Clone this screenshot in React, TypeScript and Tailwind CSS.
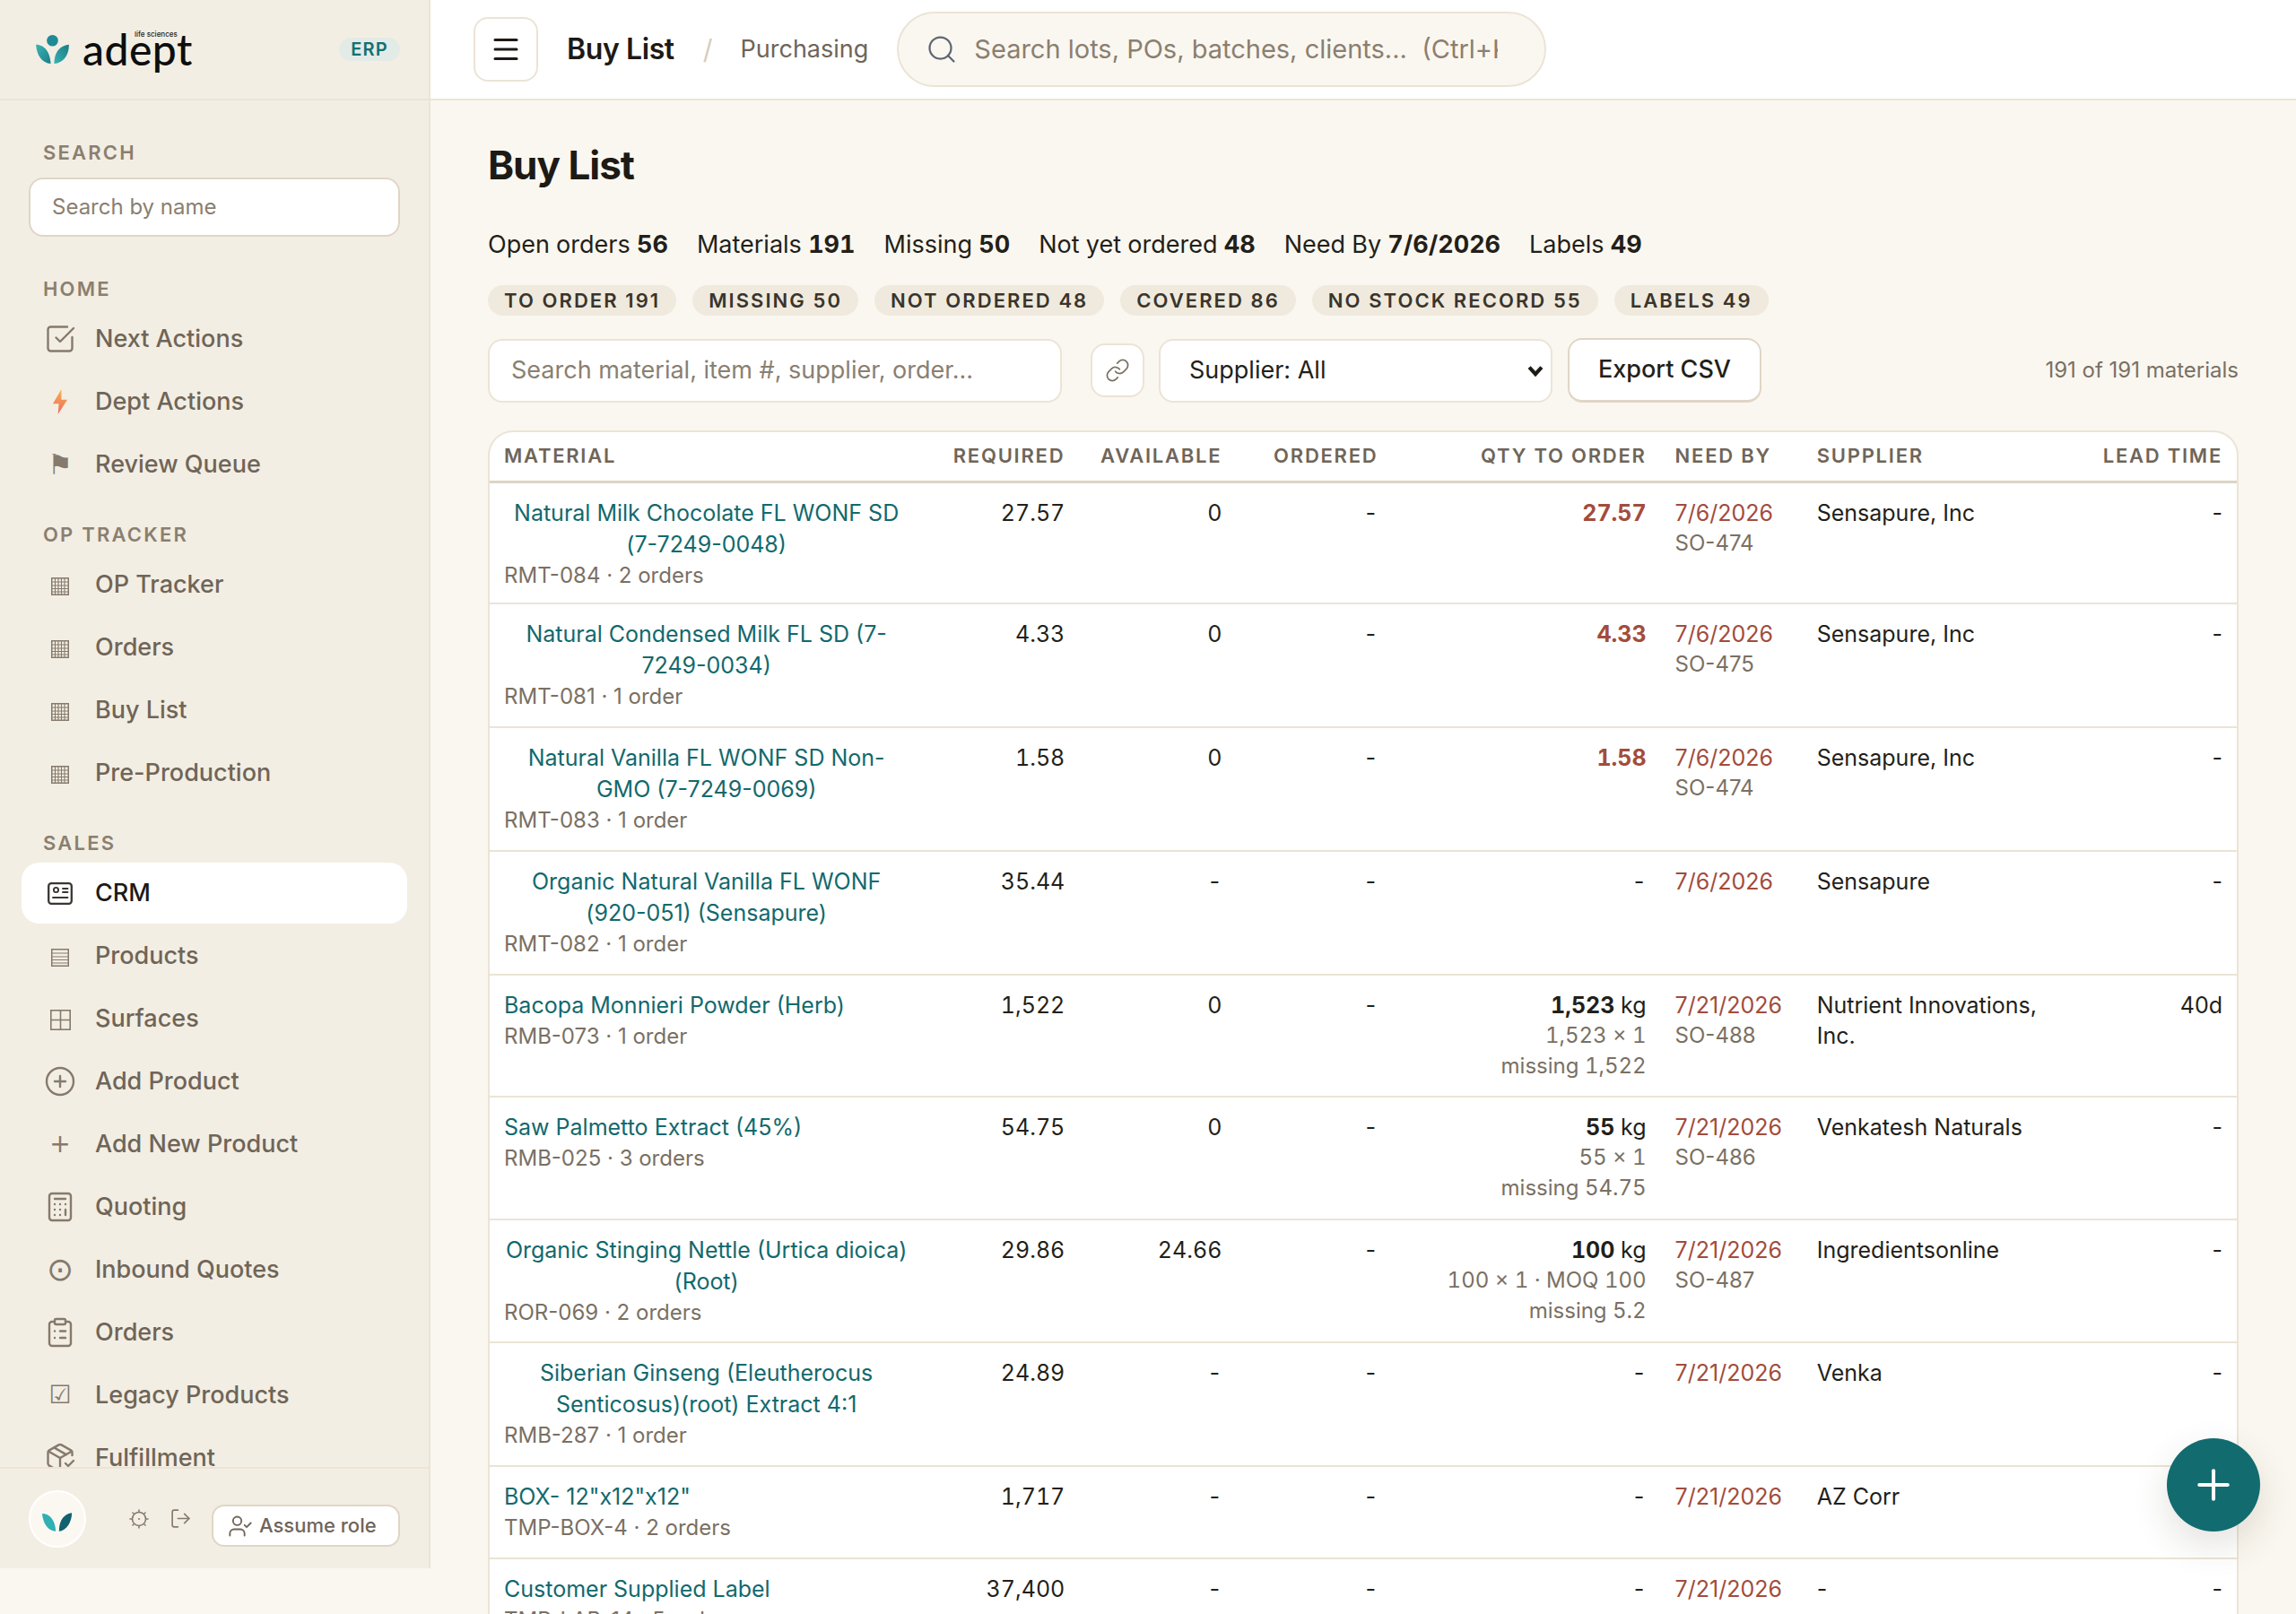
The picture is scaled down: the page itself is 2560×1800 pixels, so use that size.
import React from "react";
import { Search, Link as LinkIcon, LogOut, UserCheck, CirclePlus, SquareCheckBig, Calculator, ClipboardList, PackageCheck, Plus, Menu } from "lucide-react";

const sans = "font-['Inter','Noto_Sans',sans-serif]";

function Leaves({ className }: { className?: string }) {
  return (
    <svg viewBox="0 0 38 24" className={className}>
      <path d="M0 2C8 2 16 8 17 24C7 24 1 14 0 2Z" fill="#2fb0b2" />
      <path d="M37 1C29 2 21 8 21 24C30 23 37 13 37 1Z" fill="#12616e" />
    </svg>
  );
}

function Logo() {
  return (
    <div className="relative flex items-center">
      <svg viewBox="0 0 38 33" className="w-[37px] h-[32px] mr-[15px]">
        <defs>
          <linearGradient id="lg1" x1="0" y1="0" x2="1" y2="1">
            <stop offset="0" stopColor="#3bb5b5" />
            <stop offset="1" stopColor="#1a7f8a" />
          </linearGradient>
          <linearGradient id="lg2" x1="1" y1="0" x2="0" y2="1">
            <stop offset="0" stopColor="#1d7a86" />
            <stop offset="1" stopColor="#35b4b4" />
          </linearGradient>
        </defs>
        <circle cx="19" cy="6.5" r="6.5" fill="#1f8a96" />
        <path d="M0 11C8 11 16 17 17 33C7 32 1 24 0 11Z" fill="url(#lg1)" />
        <path d="M38 11C30 12 21 17 21 33C31 32 38 24 38 11Z" fill="url(#lg2)" />
      </svg>
      <span className="font-['Lato',sans-serif] text-[48px] leading-[50px] font-medium text-[#0e0e0e] tracking-[0.5px]">adept</span>
      <span className="absolute left-[110px] top-[3px] text-[8px] leading-[10px] font-medium text-[#222]">life sciences</span>
    </div>
  );
}

function Glyph({ ch, cls }: { ch: string; cls?: string }) {
  return <span className={`font-['DejaVu_Sans',sans-serif] leading-none ${cls ?? "text-[28px]"}`}>{ch}</span>;
}

function Zap() {
  return (
    <svg viewBox="0 0 18 26" className="w-[17px] h-[28px]" preserveAspectRatio="none">
      <defs>
        <linearGradient id="zg" x1="0" y1="0" x2="0" y2="1">
          <stop offset="0" stopColor="#f7b24f" />
          <stop offset="1" stopColor="#ec6a62" />
        </linearGradient>
      </defs>
      <path d="M10 0L0 15H7L6 26L17 11H10Z" fill="url(#zg)" />
    </svg>
  );
}

function IdCardIcon() {
  return (
    <svg viewBox="0 0 28 25" className="w-[28px] h-[25px]" fill="none" stroke="currentColor" strokeWidth="2.3" strokeLinecap="round">
      <rect x="1.2" y="1.2" width="25.6" height="22.6" rx="3" />
      <circle cx="9.5" cy="8.5" r="2.6" strokeWidth="1.9" />
      <path d="M17 7H22.5M17 11H22.5M6 17H22.5" strokeWidth="1.9" />
    </svg>
  );
}

function GridIcon() {
  return (
    <svg viewBox="0 0 20 20" className="w-[20px] h-[20px] mt-[3px]" fill="none" stroke="currentColor">
      <path d="M4.5 1V19M8 1V19M11.5 1V19M15 1V19M1 5H19M1 9H19M1 12.5H19M1 16H19" strokeWidth="1.1" />
      <rect x="0.75" y="0.75" width="18.5" height="18.5" strokeWidth="1.5" />
    </svg>
  );
}

function RowsIcon() {
  return (
    <svg viewBox="0 0 20 20" className="w-[20px] h-[20px] mt-[3px]" fill="none" stroke="currentColor">
      <path d="M1 5H19M1 9H19M1 12.5H19M1 16H19" strokeWidth="1.2" />
      <rect x="0.75" y="0.75" width="18.5" height="18.5" strokeWidth="1.5" />
    </svg>
  );
}

function QuadIcon() {
  return (
    <svg viewBox="0 0 23 23" className="w-[23px] h-[23px] mt-[3px]" fill="none" stroke="currentColor" strokeWidth="1.6">
      <rect x="0.8" y="0.8" width="21.4" height="21.4" />
      <path d="M11.5 1V22M1 11.5H22" />
    </svg>
  );
}

type NavItem = { label: string; icon: React.ReactNode; active?: boolean };

const lu = "w-[36px] h-[36px] shrink-0";
const grid = <GridIcon />;

const groups: { title: string; items: NavItem[] }[] = [
  {
    title: "HOME",
    items: [
      { label: "Next Actions", icon: <SquareCheckBig className={lu} strokeWidth={1.6} /> },
      { label: "Dept Actions", icon: <Zap /> },
      { label: "Review Queue", icon: <Glyph ch="⚑" cls="text-[31px]" /> },
    ],
  },
  {
    title: "OP TRACKER",
    items: [
      { label: "OP Tracker", icon: grid },
      { label: "Orders", icon: grid },
      { label: "Buy List", icon: grid },
      { label: "Pre-Production", icon: grid },
    ],
  },
  {
    title: "SALES",
    items: [
      { label: "CRM", icon: <IdCardIcon />, active: true },
      { label: "Products", icon: <RowsIcon /> },
      { label: "Surfaces", icon: <QuadIcon /> },
      { label: "Add Product", icon: <CirclePlus className={lu} strokeWidth={1.6} /> },
      { label: "Add New Product", icon: <Glyph ch="+" /> },
      { label: "Quoting", icon: <Calculator className={lu} strokeWidth={1.6} /> },
      { label: "Inbound Quotes", icon: <Glyph ch="⊙" cls="text-[36px]" /> },
      { label: "Orders", icon: <ClipboardList className={lu} strokeWidth={1.6} /> },
      { label: "Legacy Products", icon: <Glyph ch="☑" /> },
      { label: "Fulfillment", icon: <PackageCheck className={lu} strokeWidth={1.6} /> },
    ],
  },
];

function NavLabel({ children, cls }: { children: React.ReactNode; cls?: string }) {
  return <div className={`pl-[24px] text-[22px] leading-[28px] font-semibold tracking-[0.1em] text-[#8a7f70] ${cls ?? ""}`}>{children}</div>;
}

function Sidebar() {
  return (
    <aside className="w-[480px] h-[1749px] shrink-0 bg-[#f3eee3] border-r-2 border-[#ebe4d6] flex flex-col">
      <div className="h-[112px] shrink-0 border-b-2 border-[#ebe4d6] pl-[40px] pr-[32px] flex items-center justify-between">
        <Logo />
        <span className="w-[68px] h-[26px] rounded-full bg-[#e3ebe6] text-[#146f73] text-[20px] leading-[26px] font-semibold tracking-[0.06em] text-center">ERP</span>
      </div>
      <div className="flex-1 overflow-hidden px-[24px] pt-[44px]">
        <NavLabel>SEARCH</NavLabel>
        <div className="mt-[14px] mx-[8px] h-[66px] rounded-[16px] border-2 border-[#e0d6c6] bg-white px-[24px] flex items-center text-[24px] text-[#8a7f70]">Search by name</div>
        {groups.map((g, gi) => (
          <div key={g.title}>
            <NavLabel cls={gi === 0 ? "mt-[44px]" : "mt-[30px]"}>{g.title}</NavLabel>
            <div className="mt-[8px] flex flex-col gap-[2px]">
              {g.items.map((it, i) => (
                <div
                  key={i}
                  className={`h-[68px] shrink-0 rounded-[20px] flex items-center pl-[28px] text-[27px] font-medium ${it.active ? "bg-white text-[#1d1a16]" : "text-[#6f6558]"}`}
                >
                  <span className={`w-[30px] flex justify-center mr-[24px] ${it.active ? "text-[#3a3632]" : "text-[#857a6c]"}`}>{it.icon}</span>
                  {it.label}
                </div>
              ))}
            </div>
          </div>
        ))}
      </div>
      <div className="h-[113px] shrink-0 border-t-2 border-[#ebe4d6] pl-[32px] pr-[32px] flex items-center">
        <div className="w-[64px] h-[64px] rounded-full bg-[#fbf8f2] border-2 border-white flex items-center justify-center">
          <Leaves className="w-[34px] h-[22px] mt-[6px]" />
        </div>
        <svg viewBox="0 0 22 22" className="w-[22px] h-[22px] ml-[48px] text-[#857a6c]" fill="none" stroke="currentColor" strokeWidth="1.6" strokeLinecap="round">
          <circle cx="11" cy="11" r="7.5" />
          <circle cx="11" cy="11" r="1" fill="currentColor" stroke="none" />
          <path d="M11 1V2.5M11 19.5V21M1 11H2.5M19.5 11H21M4 4L5 5M17 17L18 18M4 18L5 17M17 5L18 4" />
        </svg>
        <LogOut className="w-[25px] h-[25px] ml-[23px] text-[#857a6c]" strokeWidth={1.6} />
        <div className="ml-auto mt-[16px] w-[210px] h-[47px] rounded-[14px] border-2 border-[#e0d6c6] bg-white flex items-center pl-[16px] text-[22px] font-medium text-[#6f6558]">
          <UserCheck className="w-[28px] h-[28px] mr-[7px]" strokeWidth={1.6} />
          Assume role
        </div>
      </div>
    </aside>
  );
}

function TopBar() {
  return (
    <header className="h-[112px] shrink-0 bg-white border-b-2 border-[#ebe4d6] pl-[48px] flex items-center">
      <div className="w-[72px] h-[72px] rounded-[16px] border-2 border-[#ebe4d6] flex items-center justify-center text-[#1d1a16]">
        <Menu className="w-[36px] h-[36px]" strokeWidth={2} />
      </div>
      <span className="ml-[32px] text-[32px] font-semibold tracking-[-0.4px] text-[#1d1a16]">Buy List</span>
      <span className="ml-[32px] text-[30px] text-[#d6cdbd]">/</span>
      <span className="ml-[31px] text-[27px] text-[#6f6558]">Purchasing</span>
      <div className="ml-[32px] w-[724px] h-[84px] rounded-[42px] border-2 border-[#ebe4d6] bg-[#faf7f0] flex items-center pl-[30px] pr-[52px]">
        <Search className="w-[36px] h-[36px] text-[#5f6672] shrink-0" strokeWidth={1.5} />
        <span className="ml-[18px] text-[29px] text-[#8a7f70] whitespace-pre overflow-hidden">Search lots, POs, batches, clients...  (Ctrl+K)</span>
      </div>
    </header>
  );
}

type Row = {
  name: string;
  sub: string;
  req: string;
  avail: string;
  ord: string;
  qty?: string;
  unit?: string;
  red?: boolean;
  q2?: string;
  q3?: string;
  date: string;
  so?: string;
  sup: string;
  lead: string;
  h: number;
};

const rows: Row[] = [
  { name: "Natural Milk Chocolate FL WONF SD (7-7249-0048)", sub: "RMT-084 · 2 orders", req: "27.57", avail: "0", ord: "-", qty: "27.57", red: true, date: "7/6/2026", so: "SO-474", sup: "Sensapure, Inc", lead: "-", h: 136 },
  { name: "Natural Condensed Milk FL SD (7-7249-0034)", sub: "RMT-081 · 1 order", req: "4.33", avail: "0", ord: "-", qty: "4.33", red: true, date: "7/6/2026", so: "SO-475", sup: "Sensapure, Inc", lead: "-", h: 138 },
  { name: "Natural Vanilla FL WONF SD Non-GMO (7-7249-0069)", sub: "RMT-083 · 1 order", req: "1.58", avail: "0", ord: "-", qty: "1.58", red: true, date: "7/6/2026", so: "SO-474", sup: "Sensapure, Inc", lead: "-", h: 138 },
  { name: "Organic Natural Vanilla FL WONF (920-051) (Sensapure)", sub: "RMT-082 · 1 order", req: "35.44", avail: "-", ord: "-", qty: "-", date: "7/6/2026", sup: "Sensapure", lead: "-", h: 138 },
  { name: "Bacopa Monnieri Powder (Herb)", sub: "RMB-073 · 1 order", req: "1,522", avail: "0", ord: "-", qty: "1,523", unit: "kg", q2: "1,523 × 1", q3: "missing 1,522", date: "7/21/2026", so: "SO-488", sup: "Nutrient Innovations, Inc.", lead: "40d", h: 136 },
  { name: "Saw Palmetto Extract (45%)", sub: "RMB-025 · 3 orders", req: "54.75", avail: "0", ord: "-", qty: "55", unit: "kg", q2: "55 × 1", q3: "missing 54.75", date: "7/21/2026", so: "SO-486", sup: "Venkatesh Naturals", lead: "-", h: 137 },
  { name: "Organic Stinging Nettle (Urtica dioica) (Root)", sub: "ROR-069 · 2 orders", req: "29.86", avail: "24.66", ord: "-", qty: "100", unit: "kg", q2: "100 × 1 · MOQ 100", q3: "missing 5.2", date: "7/21/2026", so: "SO-487", sup: "Ingredientsonline", lead: "-", h: 137 },
  { name: "Siberian Ginseng (Eleutherocus Senticosus)(root) Extract 4:1", sub: "RMB-287 · 1 order", req: "24.89", avail: "-", ord: "-", qty: "-", date: "7/21/2026", sup: "Venka", lead: "-", h: 138 },
  { name: 'BOX- 12"x12"x12"', sub: "TMP-BOX-4 · 2 orders", req: "1,717", avail: "-", ord: "-", qty: "-", date: "7/21/2026", sup: "AZ Corr", lead: "-", h: 103 },
  { name: "Customer Supplied Label", sub: "TMP-LAB-14 · 5 orders", req: "37,400", avail: "-", ord: "-", qty: "-", date: "7/21/2026", sup: "-", lead: "-", h: 102 },
];

const th = "px-[16px] pb-[2px] h-[55px] text-[22px] font-semibold tracking-[0.08em] text-[#6f6558] border-b-[3px] border-[#ded5c5]";
const td = "px-[16px] pt-[16px] align-top";
const num = "tabular-nums text-right";

function BuyTable() {
  return (
    <div className="mt-[31px] rounded-t-[28px] border-2 border-b-0 border-[#ebe4d6] bg-white overflow-hidden">
      <table className="w-full table-fixed border-collapse text-[25px] leading-[34px] text-[#231f1a]">
        <colgroup>
          <col className="w-[483px]" />
          <col className="w-[174px]" />
          <col className="w-[175px]" />
          <col className="w-[174px]" />
          <col className="w-[299px]" />
          <col className="w-[158px]" />
          <col className="w-[318px]" />
          <col className="w-[166px]" />
        </colgroup>
        <thead>
          <tr>
            <th className={`${th} text-left`}>MATERIAL</th>
            <th className={`${th} text-right`}>REQUIRED</th>
            <th className={`${th} text-right`}>AVAILABLE</th>
            <th className={`${th} text-right`}>ORDERED</th>
            <th className={`${th} text-right`}>QTY TO ORDER</th>
            <th className={`${th} text-left`}>NEED BY</th>
            <th className={`${th} text-left`}>SUPPLIER</th>
            <th className={`${th} text-right`}>LEAD TIME</th>
          </tr>
        </thead>
        <tbody>
          {rows.map((r) => (
            <tr key={r.sub} className="border-b-2 border-[#ebe4d6]" style={{ height: r.h }}>
              <td className={td}>
                <span className="inline-block text-center leading-[35px] text-[#12696d]">{r.name}</span>
                <div className="text-left text-[24px] leading-[33px] text-[#7a7063]">{r.sub}</div>
              </td>
              <td className={`${td} ${num}`}>{r.req}</td>
              <td className={`${td} ${num}`}>{r.avail}</td>
              <td className={`${td} ${num}`}>{r.ord}</td>
              <td className={`${td} ${num}`}>
                {r.unit ? (
                  <div><b className="font-bold">{r.qty}</b> {r.unit}</div>
                ) : (
                  <div className={r.red ? "font-bold text-[#a24c3c]" : ""}>{r.qty}</div>
                )}
                {r.q2 && <div className="text-[24px] text-[#7a7063]">{r.q2}</div>}
                {r.q3 && <div className="text-[24px] text-[#7a7063]">{r.q3}</div>}
              </td>
              <td className={td}>
                <div className="text-[#a24c3c]">{r.date}</div>
                {r.so && <div className="text-[24px] text-[#7a7063]">{r.so}</div>}
              </td>
              <td className={td}>{r.sup}</td>
              <td className={`${td} text-right`}>{r.lead}</td>
            </tr>
          ))}
        </tbody>
      </table>
    </div>
  );
}

const stats: [string, string][] = [
  ["Open orders", "56"],
  ["Materials", "191"],
  ["Missing", "50"],
  ["Not yet ordered", "48"],
  ["Need By", "7/6/2026"],
  ["Labels", "49"],
];
const chips = ["TO ORDER 191", "MISSING 50", "NOT ORDERED 48", "COVERED 86", "NO STOCK RECORD 55", "LABELS 49"];

export default function App() {
  return (
    <div className={`${sans} h-screen overflow-hidden bg-[#faf7f0] flex items-start text-[#231f1a]`}>
      <Sidebar />
      <main className="flex-1 min-w-0 flex flex-col">
        <TopBar />
        <div className="pl-[64px] pr-[64px] pt-[42px]">
          <h1 className="text-[44px] leading-[60px] font-bold tracking-[-1px] text-[#1d1a16]">Buy List</h1>
          <div className="mt-[39px] flex gap-[32px] text-[27px] leading-[40px] tabular-nums">
            {stats.map(([a, b]) => (
              <span key={a}>{a} <b className="font-bold">{b}</b></span>
            ))}
          </div>
          <div className="mt-[25px] flex gap-[18px]">
            {chips.map((c) => (
              <span key={c} className="h-[34px] px-[18px] rounded-full bg-[#efeadd] text-[22px] leading-[34px] font-semibold tracking-[0.094em] text-[#3a342c]">{c}</span>
            ))}
          </div>
          <div className="mt-[25px] flex items-center">
            <div className="w-[640px] h-[71px] rounded-[16px] border-2 border-[#ebe4d6] bg-white pl-[24px] flex items-center text-[27px] text-[#8a7f70]">Search material, item #, supplier, order...</div>
            <div className="ml-[32px] w-[60px] h-[60px] rounded-[16px] border-2 border-[#ebe4d6] bg-white flex items-center justify-center text-[#7a7063]">
              <LinkIcon className="w-[28px] h-[28px]" strokeWidth={1.5} />
            </div>
            <div className="ml-[16px] w-[439px] h-[71px] rounded-[16px] border-2 border-[#ebe4d6] bg-white pl-[32px] pr-[6px] flex items-center justify-between text-[27px]">
              Supplier: All
              <svg viewBox="0 0 16 16" className="w-[22px] h-[22px]" fill="none" stroke="#1d1a16" strokeWidth="3"><path d="M3 5.5L8 11L13 5.5" /></svg>
            </div>
            <div className="ml-[17px] w-[216px] h-[72px] rounded-[16px] border-2 border-b-[3px] border-[#e0d6c6] bg-white flex items-center justify-center text-[27px] font-medium">Export CSV</div>
            <span className="ml-auto text-[24px] text-[#7a7063]">191 of 191 materials</span>
          </div>
          <BuyTable />
        </div>
      </main>
      <div className="fixed left-[2416px] top-[1604px] w-[104px] h-[104px] rounded-full bg-[#126b6f] shadow-[0_16px_40px_rgba(60,50,30,0.14)] flex items-center justify-center text-white">
        <Plus className="w-[54px] h-[54px]" strokeWidth={1.8} />
      </div>
    </div>
  );
}
